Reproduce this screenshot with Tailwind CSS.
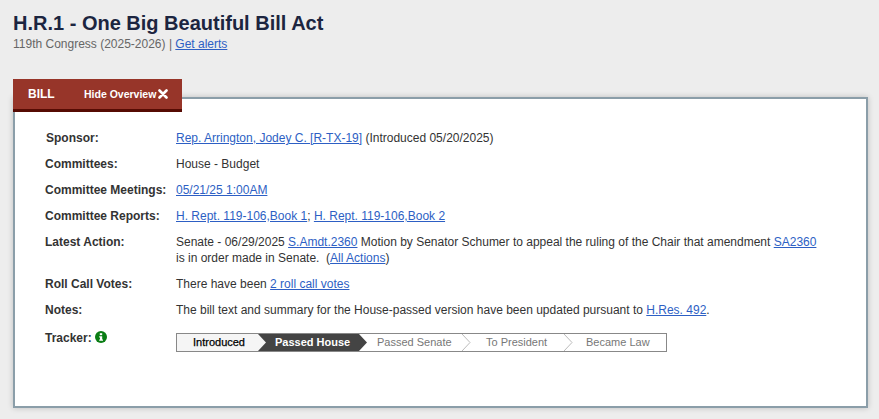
<!DOCTYPE html>
<html lang="en">
<head>
    <meta charset="UTF-8">
    <meta name="viewport" content="width=device-width, initial-scale=1.0">
    <title>H.R.1 - One Big Beautiful Bill Act</title>
    <script src="https://cdn.jsdelivr.net/npm/@tailwindcss/browser@4"></script>
</head>
<body class="bg-[#ededed] h-[419px] overflow-hidden font-['Liberation_Sans',Arial,sans-serif] text-[12px] leading-[16px] text-[#333]">
    <div class="pl-[13px] pr-[11px] pt-[11px]">
        <h1 class="text-[20px] leading-[24px] font-bold text-[#1c2540]">H.R.1 - One Big Beautiful Bill Act</h1>
        <p class="text-[#666] mt-[1px]">119th Congress (2025-2026) | <a href="#" class="text-[#2d5fc4] underline">Get alerts</a></p>

        <div class="relative z-10 mt-[27px] w-[169px] h-[33px] bg-[#973529] border-b-[3px] border-[#560b03] text-white font-bold flex items-center">
            <span class="pl-[15px] w-[71px]">BILL</span>
            <span class="text-[10.5px] flex items-center gap-[2px]">Hide Overview
                <svg width="10" height="10" viewBox="0 0 10 10"><path d="M1.5 1.5l7 7M8.5 1.5l-7 7" stroke="#fff" stroke-width="2.6" stroke-linecap="round"/></svg>
            </span>
        </div>

        <div class="-mt-[15px] h-[311px] bg-white border-2 border-[#8b9ea9] shadow-[0_0_6px_rgba(0,0,0,0.2)] pt-[31px] pl-[30px]">
            <dl class="grid grid-cols-[131px_660px] gap-y-[10px]">
                <dt class="font-bold pl-[1px]">Sponsor:</dt>
                <dd><a href="#" class="text-[#2d5fc4] underline">Rep. Arrington, Jodey C. [R-TX-19]</a> (Introduced 05/20/2025)</dd>
                <dt class="font-bold">Committees:</dt>
                <dd>House - Budget</dd>
                <dt class="font-bold">Committee Meetings:</dt>
                <dd><a href="#" class="text-[#2d5fc4] underline">05/21/25 1:00AM</a></dd>
                <dt class="font-bold">Committee Reports:</dt>
                <dd><a href="#" class="text-[#2d5fc4] underline">H. Rept. 119-106,Book 1</a>; <a href="#" class="text-[#2d5fc4] underline">H. Rept. 119-106,Book 2</a></dd>
                <dt class="font-bold">Latest Action:</dt>
                <dd>Senate - 06/29/2025 <a href="#" class="text-[#2d5fc4] underline">S.Amdt.2360</a> Motion by Senator Schumer to appeal the ruling of the Chair that amendment <a href="#" class="text-[#2d5fc4] underline">SA2360</a><br>is in order made in Senate. &nbsp;(<a href="#" class="text-[#2d5fc4] underline">All Actions</a>)</dd>
                <dt class="font-bold">Roll Call Votes:</dt>
                <dd>There have been <a href="#" class="text-[#2d5fc4] underline">2 roll call votes</a></dd>
                <dt class="font-bold">Notes:</dt>
                <dd>The bill text and summary for the House-passed version have been updated pursuant to <a href="#" class="text-[#2d5fc4] underline">H.Res. 492</a>.</dd>
                <dt class="font-bold flex items-start gap-[3px] mt-[2px]">Tracker:
                    <svg class="mt-[1px]" width="12" height="12" viewBox="0 0 12 12"><circle cx="6" cy="6" r="6" fill="#0a7d14"/><rect x="4.8" y="2.2" width="2.4" height="2" fill="#fff"/><path d="M4.2 5.2h3v3.4h.8v1.2H4.2V8.6H5V6.4h-.8z" fill="#fff"/></svg>
                </dt>
                <dd class="mt-[5px]">
                    <ol class="flex w-[491px] h-[19px] border border-[#888] text-[11px] leading-[17px] overflow-hidden">
                        <li class="relative w-[81px] bg-[#f5f5f5] text-black [-webkit-text-stroke:0.25px_black] pl-[16px]">Introduced
                            <svg class="absolute left-[81px] top-0 z-10" width="9" height="17" viewBox="0 0 9 17"><path d="M0 0l8 8.5-8 8.5z" fill="#f5f5f5"/></svg>
                        </li>
                        <li class="relative w-[101px] font-bold text-white pl-[17px] z-0">
                            <svg class="absolute left-0 top-0 -z-10" width="110" height="17" viewBox="0 0 110 17"><path d="M0 0h101l8 8.5-8 8.5H0z" fill="#444"/></svg>
                            Passed House
                        </li>
                        <li class="relative w-[103px] text-[#777] pl-[18px]">Passed Senate
                            <svg class="absolute left-[103px] top-0" width="10" height="17" viewBox="0 0 10 17"><path d="M0 0l8 8.5-8 8.5" fill="none" stroke="#bbb"/></svg>
                        </li>
                        <li class="relative w-[102px] text-[#777] pl-[24px]">To President
                            <svg class="absolute left-[102px] top-0" width="10" height="17" viewBox="0 0 10 17"><path d="M0 0l8 8.5-8 8.5" fill="none" stroke="#bbb"/></svg>
                        </li>
                        <li class="flex-1 text-[#777] pl-[22px]">Became Law</li>
                    </ol>
                </dd>
            </dl>
        </div>
    </div>
</body>
</html>
